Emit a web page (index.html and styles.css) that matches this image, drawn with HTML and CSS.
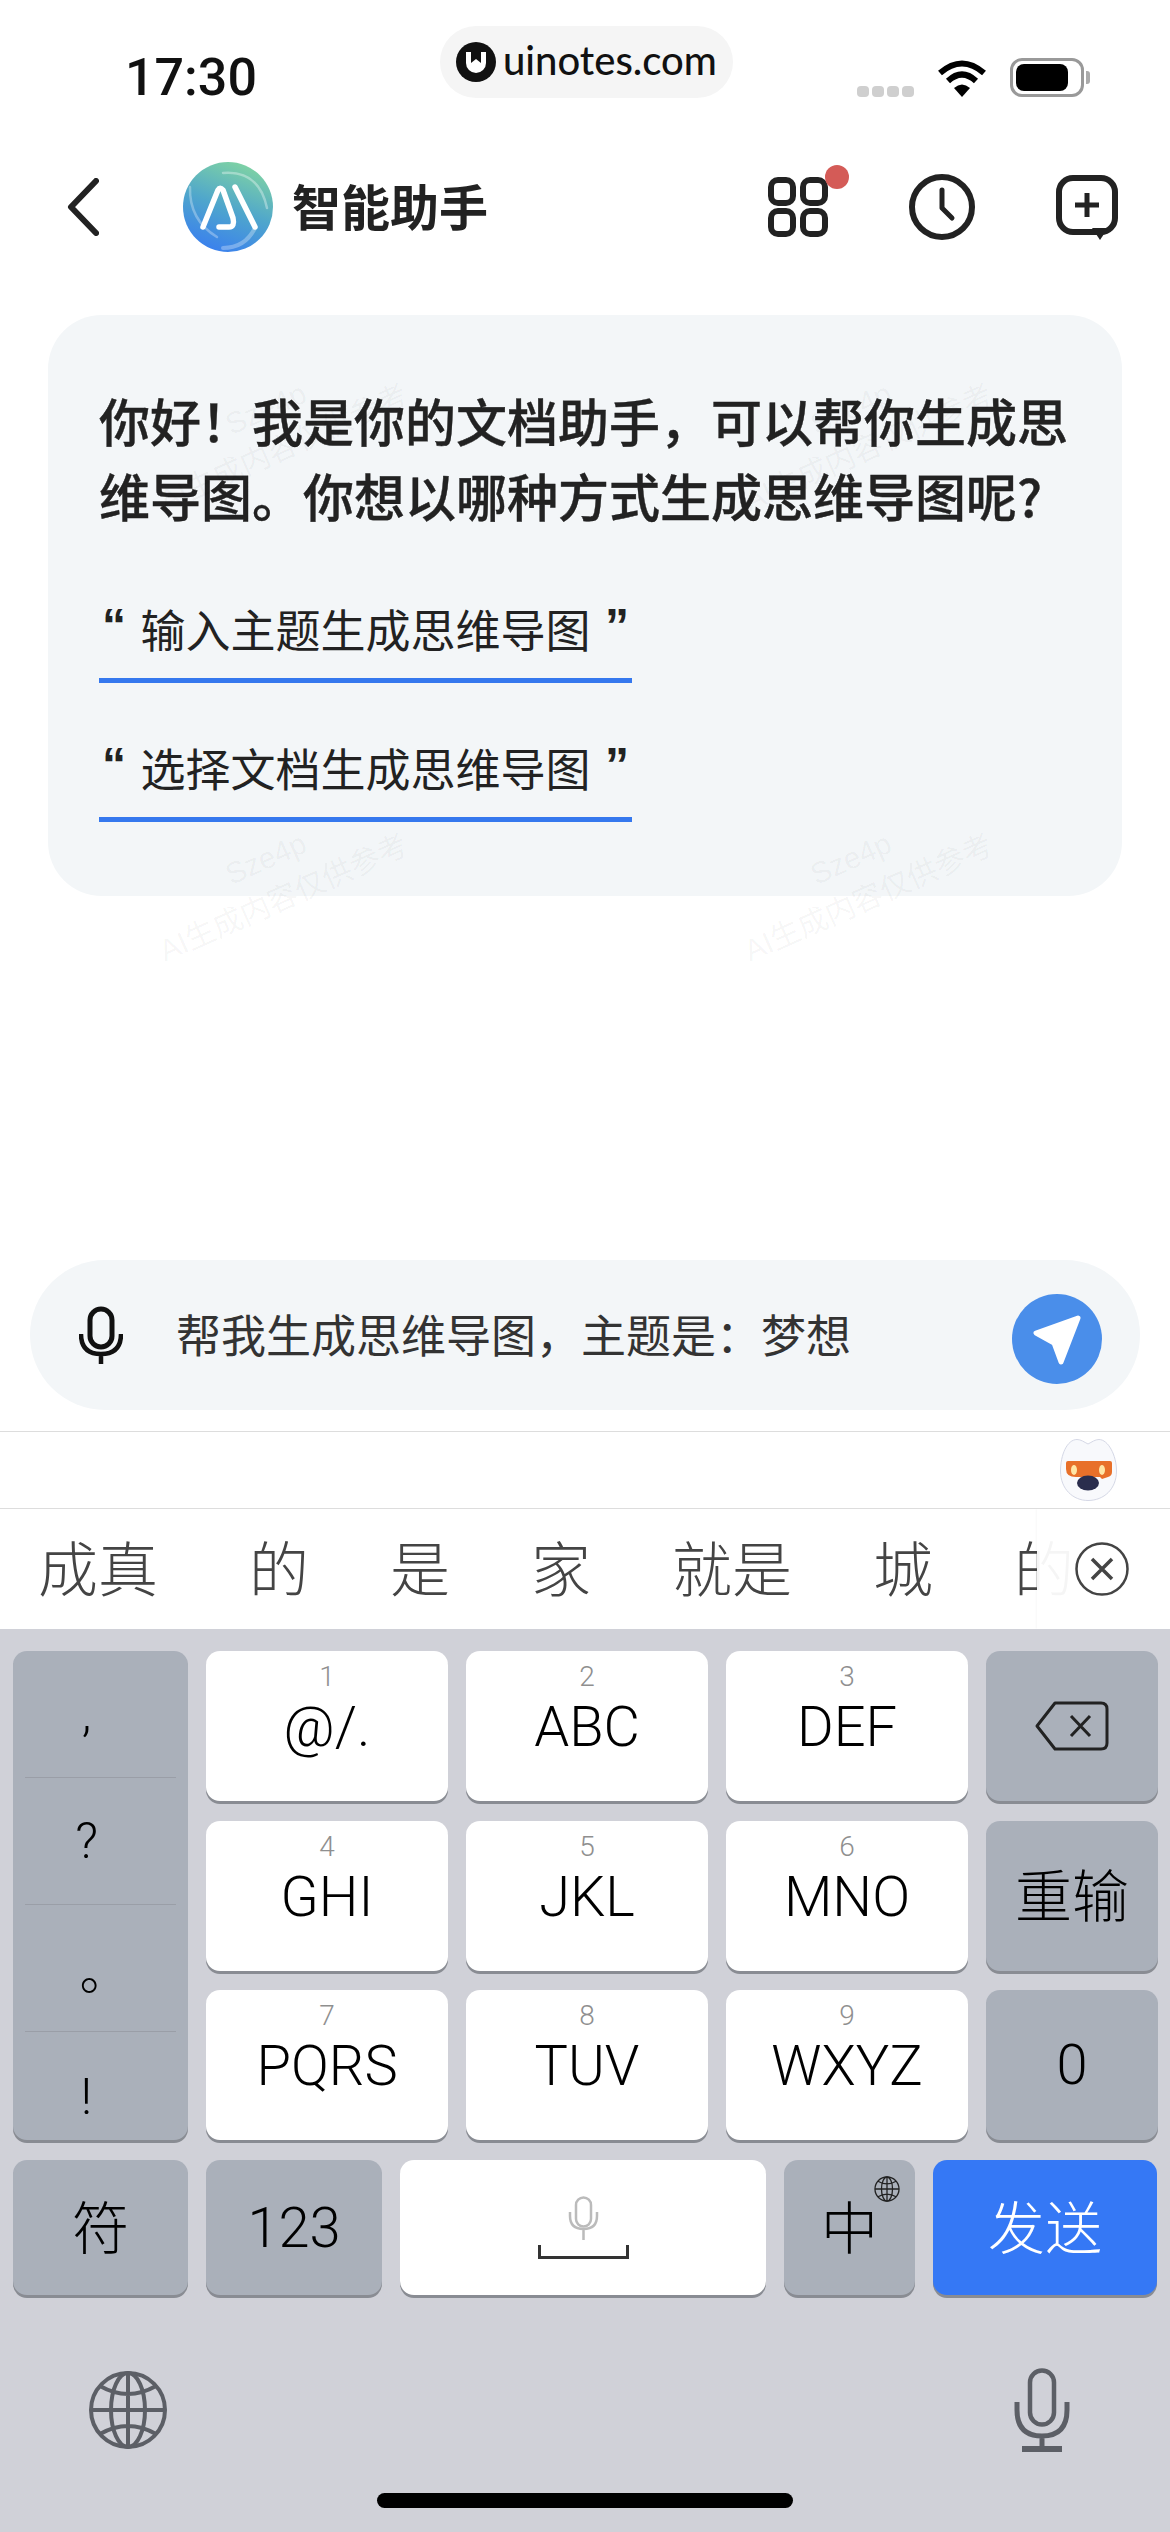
FILE: index.html
```html
<!DOCTYPE html>
<html lang="zh-CN">
<head>
    <meta charset="UTF-8">
    <meta name="viewport" content="width=device-width, initial-scale=1.0">
    <title>智能助手</title>
    <link rel="stylesheet" href="styles.css">
</head>
<body>

<svg class="defs" width="0" height="0">
    <symbol id="globe" viewBox="0 0 80 80">
        <g fill="none" stroke="currentColor" stroke-width="4">
            <circle cx="40" cy="40" r="37"/>
            <ellipse cx="40" cy="40" rx="17" ry="37"/>
            <path d="M40 3V77M3 40H77M12 16Q40 32 68 16M12 64Q40 48 68 64"/>
        </g>
    </symbol>
</svg>

<div class="watermarks">
    <div class="mark"><span>Sze4p</span><span>AI生成内容仅供参考</span></div>
    <div class="mark"><span>Sze4p</span><span>AI生成内容仅供参考</span></div>
    <div class="mark"><span>Sze4p</span><span>AI生成内容仅供参考</span></div>
    <div class="mark"><span>Sze4p</span><span>AI生成内容仅供参考</span></div>
</div>

<div class="status-bar">
    <div class="time">17:30</div>
    <div class="site-pill">
        <svg width="40" height="40" viewBox="0 0 40 40">
            <circle cx="20" cy="20" r="20" fill="#111"/>
            <path d="M10 10V21A10 10 0 0 0 30 21V10Z" fill="#fff"/>
            <path d="M15 10V21L20 17L25 21V10Z" fill="#111"/>
        </svg>
        <span>uinotes.com</span>
    </div>
    <div class="status-icons">
        <div class="signal"><i></i><i></i><i></i><i></i></div>
        <svg width="50" height="37" viewBox="0 0 50 37">
            <g fill="none" stroke="#000" stroke-width="6">
                <path d="M3 13Q25 -6 47 13"/>
                <path d="M11 21Q25 8 39 21"/>
            </g>
            <path d="M17 28Q25 21 33 28L25 37Z"/>
        </svg>
        <div class="battery"><div class="battery-fill"></div></div>
    </div>
</div>

<div class="nav">
    <svg class="back" width="32" height="58" viewBox="0 0 32 58">
        <path d="M29 3L4 29L29 55" fill="none" stroke="#222" stroke-width="6" stroke-linecap="round" stroke-linejoin="round"/>
    </svg>
    <svg class="logo" width="90" height="90" viewBox="0 0 90 90">
        <defs>
            <linearGradient id="logoFill" x1="0.7" y1="0.05" x2="0.35" y2="1">
                <stop offset="0" stop-color="#7cd0a6"/>
                <stop offset="0.5" stop-color="#4fa6cc"/>
                <stop offset="1" stop-color="#3a80ee"/>
            </linearGradient>
        </defs>
        <circle cx="45" cy="45" r="45" fill="url(#logoFill)"/>
        <g fill="none" stroke="#fff" stroke-linecap="round" stroke-linejoin="round">
            <path d="M40 11Q76 8 84 46" stroke-width="2.5" opacity="0.35"/>
            <path d="M7 25Q6 58 34 75" stroke-width="2.5" opacity="0.3"/>
            <path d="M40 86Q62 86 72 66" stroke-width="4" opacity="0.3"/>
            <path d="M20 65L35 28Q37 24.500 40 28L50 56Q52 65 46 65H36" stroke-width="5.500"/>
            <path d="M52 25L72 65" stroke-width="5.500"/>
        </g>
    </svg>
    <div class="nav-title">智能助手</div>
    <div class="nav-actions">
        <div class="apps">
            <svg width="60" height="60" viewBox="0 0 60 60">
                <g fill="none" stroke="#222" stroke-width="6">
                    <rect x="3" y="3" width="22" height="23" rx="7"/>
                    <rect x="35" y="3" width="22" height="23" rx="7"/>
                    <rect x="3" y="34" width="22" height="23" rx="7"/>
                    <rect x="35" y="34" width="22" height="23" rx="7"/>
                </g>
            </svg>
            <span class="dot"></span>
        </div>
        <svg width="66" height="66" viewBox="0 0 66 66">
            <circle cx="33" cy="33" r="30" fill="none" stroke="#222" stroke-width="6"/>
            <path d="M33 16V34L43 44" fill="none" stroke="#222" stroke-width="5" stroke-linecap="round" stroke-linejoin="round"/>
        </svg>
        <svg width="62" height="65" viewBox="0 0 62 65">
            <rect x="3" y="3" width="56" height="54" rx="14" fill="none" stroke="#222" stroke-width="6"/>
            <path d="M36 53H52L44 65Z" fill="#222"/>
            <path d="M31 18V42M19 30H43" fill="none" stroke="#222" stroke-width="5"/>
        </svg>
    </div>
</div>

<div class="chat">
    <div class="card">
        <p class="greeting">你好&#xFF01;我是你的文档助手&#xFF0C;可以帮你生成思维导图。你想以哪种方式生成思维导图呢?</p>
        <div class="prompt"><span class="quote">“</span><span>输入主题生成思维导图</span><span class="quote">”</span></div>
        <div class="prompt second"><span class="quote">“</span><span>选择文档生成思维导图</span><span class="quote">”</span></div>
    </div>
</div>

<div class="input-wrap">
    <div class="input">
        <svg width="44" height="58" viewBox="0 0 44 58">
            <rect x="11" y="3" width="22" height="38" rx="11" fill="none" stroke="#111" stroke-width="5"/>
            <path d="M2 28Q2 48 22 48Q42 48 42 28M22 48V58" fill="none" stroke="#111" stroke-width="4.500"/>
        </svg>
        <div class="input-text">帮我生成思维导图&#xFF0C;主题是&#xFF1A;梦想</div>
        <div class="send">
            <svg width="54" height="52" viewBox="0 0 54 52">
                <path d="M48 5L6 20L24 30L31 49Z" fill="#fff" stroke="#fff" stroke-width="5" stroke-linejoin="round"/>
            </svg>
        </div>
    </div>
</div>

<div class="toolbar">
    <svg width="57" height="62" viewBox="0 0 57 62">
        <path d="M28 5C24 3 21 .5 17 .5C7 .5 .5 16 .5 32C.5 50 13 61.500 28 61.500C44 61.500 56.500 50 56.500 32C56.500 16 48 .5 39 .5C35 .5 32 3 28 5Z" fill="#f8f9fc" stroke="#d5d8e6"/>
        <path d="M8 22H50Q52 22 52 24V33Q52 37 48 38L42 40L40 38H16Q6 38 6 30V24Q6 22 8 22Z" fill="#e8702a"/>
        <ellipse cx="14" cy="31" rx="3" ry="5" fill="#ffe6a6"/>
        <ellipse cx="42" cy="31" rx="3" ry="5" fill="#ffe6a6"/>
        <ellipse cx="28" cy="44" rx="11" ry="7.500" fill="#2a2d4d"/>
    </svg>
</div>

<div class="candidates">
    <span class="first">成真</span><span>的</span><span>是</span><span>家</span><span>就是</span><span>城</span><span>的</span>
    <div class="cand-close">
        <svg width="54" height="54" viewBox="0 0 54 54">
            <circle cx="27" cy="27" r="25.500" fill="none" stroke="#444" stroke-width="2.500"/>
            <path d="M17 17L37 37M37 17L17 37" fill="none" stroke="#444" stroke-width="3.500"/>
        </svg>
    </div>
</div>

<div class="keyboard">
    <div class="key-grid">
        <div class="key gray punct">
            <div>,</div>
            <div>?</div>
            <div class="stop">。</div>
            <div class="last">!</div>
        </div>
        <div class="key"><span class="num">1</span><span class="letters">@/.</span></div>
        <div class="key"><span class="num">2</span><span class="letters">ABC</span></div>
        <div class="key"><span class="num">3</span><span class="letters">DEF</span></div>
        <div class="key gray center">
            <svg width="74" height="50" viewBox="0 0 74 50">
                <path d="M20 2H66Q72 2 72 8V42Q72 48 66 48H20L2 25Z" fill="none" stroke="#222" stroke-width="3" stroke-linejoin="round"/>
                <path d="M36 15L55 35M55 15L36 35" fill="none" stroke="#222" stroke-width="3"/>
            </svg>
        </div>
        <div class="key"><span class="num">4</span><span class="letters">GHI</span></div>
        <div class="key"><span class="num">5</span><span class="letters">JKL</span></div>
        <div class="key"><span class="num">6</span><span class="letters">MNO</span></div>
        <div class="key gray center label-cjk">重输</div>
        <div class="key"><span class="num">7</span><span class="letters">PQRS</span></div>
        <div class="key"><span class="num">8</span><span class="letters">TUV</span></div>
        <div class="key"><span class="num">9</span><span class="letters">WXYZ</span></div>
        <div class="key gray center label">0</div>
    </div>

    <div class="key-row">
        <div class="key gray center label-cjk sym">符</div>
        <div class="key gray center label num-key">123</div>
        <div class="key center space-key">
            <svg width="31" height="44" viewBox="0 0 31 44">
                <rect x="8" y="1.500" width="15" height="29" rx="7.500" fill="none" stroke="#bbb" stroke-width="2.500"/>
                <path d="M2 16V20Q2 33 15.500 33Q29 33 29 20V16M15.500 33V44" fill="none" stroke="#bbb" stroke-width="2.500"/>
            </svg>
            <svg width="91" height="14" viewBox="0 0 91 14">
                <path d="M1.500 0V12.500H89.500V0" fill="none" stroke="#333" stroke-width="3"/>
            </svg>
        </div>
        <div class="key gray center label-cjk lang-key">
            中
            <svg class="lang-globe" width="26" height="26"><use href="#globe"/></svg>
        </div>
        <div class="key center label-cjk send-key">发送</div>
    </div>

    <div class="kb-bottom">
        <svg class="kb-icon" width="80" height="80"><use href="#globe"/></svg>
        <svg class="kb-icon" width="56" height="84" viewBox="0 0 56 84">
            <g fill="none" stroke="currentColor">
                <rect x="16" y="2.500" width="24" height="54" rx="12" stroke-width="4.500"/>
                <path d="M3 34V42Q3 68 28 68Q53 68 53 42V34M28 68V80" stroke-width="5"/>
                <path d="M8 81H48" stroke-width="6"/>
            </g>
        </svg>
    </div>
    <div class="home-bar"></div>
</div>

</body>
</html>
```

FILE: styles.css
```css
* {
    box-sizing: border-box;
}
body {
    margin: 0;
    width: 1170px;
    height: 2532px;
    overflow: hidden;
    position: relative;
    background: #fff;
    color: #222;
    font-family: "Noto Sans CJK SC", "Noto Sans", sans-serif;
    display: flex;
    flex-direction: column;
}
svg {
    display: block;
    flex-shrink: 0;
}
.defs {
    position: absolute;
}

/* faint labels lying over the card */
.watermarks {
    position: absolute;
    left: -18px;
    top: 203px;
    display: grid;
    grid-template-columns: 585px 585px;
    grid-auto-rows: 450px;
    z-index: 2;
    pointer-events: none;
}
.mark {
    display: flex;
    flex-direction: column;
    align-items: center;
    justify-content: center;
    gap: 5px;
    font-family: "Liberation Sans", "Noto Sans CJK SC", sans-serif;
    font-size: 30px;
    line-height: 38px;
    color: rgba(0, 0, 0, 0.045);
    transform: rotate(-24deg);
}

.status-bar {
    height: 130px;
    flex-shrink: 0;
    display: flex;
    align-items: flex-start;
    padding-left: 125px;
}
.time {
    width: 130px;
    margin-top: 53px;
    font-family: Roboto, sans-serif;
    font-size: 52px;
    font-weight: 500;
    line-height: 50px;
    color: #111;
    white-space: nowrap;
}
.site-pill {
    margin-left: 185px;
    margin-top: 26px;
    width: 293px;
    height: 72px;
    border-radius: 36px;
    background: #f5f5f5;
    display: flex;
    align-items: center;
    gap: 7px;
    padding-left: 16px;
    font-family: Lato, sans-serif;
    font-size: 40px;
    font-weight: 500;
    color: #111;
}
.site-pill span {
    padding-bottom: 5px;
}
.status-icons {
    margin-top: 58px;
    margin-left: 124px;
    height: 39px;
    display: flex;
    align-items: flex-end;
    gap: 23px;
}
.signal {
    display: flex;
    gap: 3px;
}
.signal i {
    width: 12px;
    height: 11px;
    border-radius: 4px;
    background: #cfcfcf;
}
.battery {
    position: relative;
    width: 74px;
    height: 39px;
    border: 3px solid #999;
    border-radius: 12px;
    padding: 3px;
}
.battery:after {
    content: "";
    position: absolute;
    right: -9px;
    top: 10px;
    width: 4px;
    height: 13px;
    border-radius: 0 3px 3px 0;
    background: #aaa;
}
.battery-fill {
    width: 52px;
    height: 100%;
    border-radius: 8px;
    background: #000;
}

.nav {
    height: 154px;
    flex-shrink: 0;
    display: flex;
    align-items: center;
    padding: 0 52px 0 67px;
}
.logo {
    margin-left: 84px;
}
.nav-title {
    margin-left: 19px;
    margin-top: -5px;
    font-size: 49px;
    font-weight: 700;
    color: #222;
}
.nav-actions {
    margin-left: auto;
    display: flex;
    align-items: center;
    gap: 81px;
}
.apps {
    position: relative;
}
.dot {
    position: absolute;
    right: -21px;
    top: -12px;
    width: 24px;
    height: 24px;
    border-radius: 50%;
    background: #d45b57;
}

.chat {
    flex: 1;
    padding: 31px 48px 0;
}
.card {
    background: #f3f6f8;
    border-radius: 54px;
    height: 581px;
    padding: 68px 51px 0;
}
.greeting {
    margin: 0;
    font-size: 51px;
    font-weight: 500;
    -webkit-text-stroke: 0.4px #222;
    line-height: 75px;
    color: #222;
}
.prompt {
    margin-top: 72px;
    width: 533px;
    height: 78px;
    padding: 0 0 25px;
    border-bottom: 5px solid #3578ee;
    display: flex;
    align-items: center;
    justify-content: space-between;
    font-size: 45px;
    line-height: 50px;
    color: #222;
}
.prompt.second {
    margin-top: 61px;
}
.quote {
    font-family: "Liberation Sans", sans-serif;
    font-size: 48px;
    font-weight: 700;
    height: 50px;
    margin-top: -6px;
    padding: 0 3px;
}

.input-wrap {
    padding: 0 30px;
    flex-shrink: 0;
}
.input {
    height: 150px;
    border-radius: 75px;
    background: #f3f6f8;
    display: flex;
    align-items: center;
    padding: 0 38px 0 49px;
}
.input-text {
    margin-left: 53px;
    font-size: 45px;
    color: #333;
    margin-top: -3px;
}
.send {
    margin-left: auto;
    margin-top: 8px;
    width: 90px;
    height: 90px;
    border-radius: 50%;
    background: #4a8eea;
    display: flex;
    align-items: center;
    justify-content: center;
}

.toolbar {
    margin-top: 21px;
    height: 78px;
    flex-shrink: 0;
    border-top: 1px solid #ddd;
    border-bottom: 1px solid #ddd;
    display: flex;
    justify-content: flex-end;
    align-items: center;
    padding-right: 53px;
}
.candidates {
    position: relative;
    height: 120px;
    flex-shrink: 0;
    overflow: hidden;
    display: flex;
    align-items: center;
    gap: 81px;
    padding: 0 0 8px 38px;
    font-size: 60px;
    font-weight: 300;
    color: #444;
    white-space: nowrap;
}
.candidates .first {
    margin-right: 10px;
}
.cand-close {
    position: absolute;
    left: 1037px;
    right: 0;
    top: 0;
    bottom: 0;
    display: flex;
    align-items: center;
    padding-left: 38px;
    background: rgba(255, 255, 255, 0.95);
    box-shadow: -1px 0 2px rgba(0, 0, 0, 0.03);
}

.keyboard {
    flex-shrink: 0;
    height: 903px;
    background: #d0d1d8;
    padding: 22px 13px 0;
}
.key-grid {
    display: grid;
    grid-template-columns: 175px 242px 242px 242px 172px;
    grid-template-rows: 150px 150px 150px;
    column-gap: 18px;
    row-gap: 19.5px;
}
.key {
    background: #fff;
    border-radius: 14px;
    box-shadow: 0 3px 0 #898c93;
    color: #000;
    display: flex;
    flex-direction: column;
    align-items: center;
    padding-top: 10px;
}
.key.gray {
    background: #aab0ba;
}
.key.center {
    justify-content: center;
    padding-top: 0;
}
.num {
    font-family: Roboto, sans-serif;
    font-size: 28px;
    font-weight: 300;
    line-height: 32px;
    color: #8f8f8f;
}
.letters {
    margin-top: 6px;
    font-family: Roboto, sans-serif;
    font-size: 56px;
    font-weight: 300;
    line-height: 56px;
}
.label {
    font-family: Roboto, sans-serif;
    font-size: 56px;
    font-weight: 300;
}
.key.center.label-cjk {
    font-size: 57px;
    font-weight: 300;
    line-height: 60px;
    padding-bottom: 8px;
}
.key.punct {
    grid-row: 1 / span 3;
    padding: 0 12px;
    align-items: stretch;
    font-family: Roboto, sans-serif;
    font-weight: 300;
    font-size: 50px;
    line-height: 56px;
}
.punct div {
    height: 127px;
    flex-shrink: 0;
    border-bottom: 1px solid #9a9ea7;
    padding-right: 28px;
    display: flex;
    align-items: center;
    justify-content: center;
}
.punct .stop {
    font-family: "Noto Sans CJK SC", sans-serif;
    font-weight: 300;
    padding-left: 26px;
    padding-right: 18px;
}
.punct .last {
    border-bottom: 0;
    height: 109px;
    padding-top: 20px;
}

.key-row {
    margin-top: 20px;
    display: flex;
    gap: 18px;
}
.key-row .key {
    height: 135px;
}
.sym {
    width: 175px;
}
.num-key {
    width: 176px;
}
.space-key {
    width: 366px;
    gap: 5px;
}
.lang-key {
    position: relative;
    width: 131px;
}
.lang-globe {
    position: absolute;
    right: 15px;
    top: 16px;
    color: #222;
}
.send-key {
    width: 224px;
    background: #3578f5;
    color: #fff;
}

.kb-bottom {
    margin-top: 72px;
    height: 85px;
    display: flex;
    justify-content: space-between;
    align-items: center;
    padding: 0 87px 0 75px;
}
.kb-icon {
    color: #5c5f66;
}
.home-bar {
    margin: 41px auto 0;
    width: 416px;
    height: 15px;
    border-radius: 8px;
    background: #000;
}
```
